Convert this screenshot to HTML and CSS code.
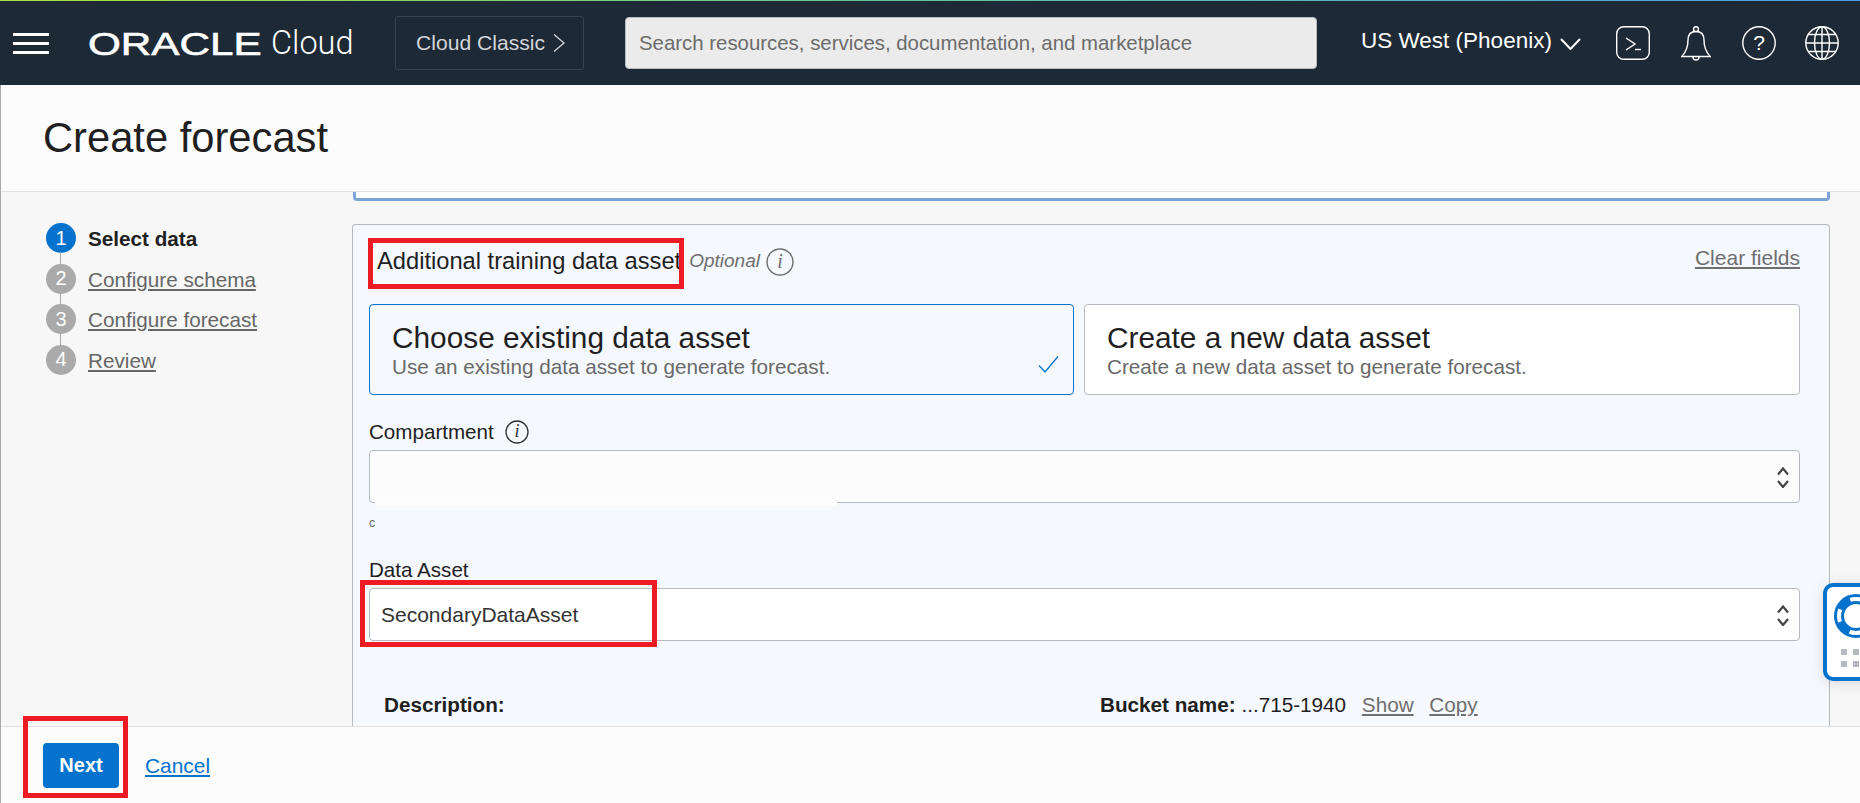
FILE: index.html
```html
<!DOCTYPE html>
<html lang="en">
<head>
  <meta charset="UTF-8">
  <title>Create forecast</title>
  <link rel="stylesheet" href="styles.css">
</head>
<body>
  <header class="topbar">
    <div class="hamburger"><span></span><span></span><span></span></div>
    <div class="logo"><span class="logo-oracle">ORACLE</span></div>
    <span class="logo-cloud">Cloud</span>
    <div class="classic-btn">
      <span>Cloud Classic</span>
      <svg width="12" height="18" viewBox="0 0 12 18"><path d="M1 0.5 L11 9 L1 17.5" fill="none" stroke="#d3d6d9" stroke-width="1.3"/></svg>
    </div>
    <div class="search">Search resources, services, documentation, and marketplace</div>
    <div class="region">US West (Phoenix)</div>
    <svg class="region-chevron" width="21" height="12" viewBox="0 0 21 12"><path d="M1 1 L10.5 11 L20 1" fill="none" stroke="#fff" stroke-width="2"/></svg>
    <svg class="icon-terminal" width="34" height="34" viewBox="0 0 34 34" fill="none" stroke="#fff" stroke-width="1.4">
      <rect x="0.7" y="0.7" width="32.6" height="32.6" rx="7"/>
      <path d="M10 12 L19 18 L10 24"/>
      <path d="M19 23.5 H25"/>
    </svg>
    <svg class="icon-bell" width="30" height="35" viewBox="0 0 30 35" fill="none" stroke="#fff" stroke-width="1.4">
      <circle cx="15" cy="3.2" r="2.4"/>
      <path d="M15 5.5 C9 5.5 7 9.5 7 14 C7 21 5 26 0.8 30.5 H29.2 C25 26 23 21 23 14 C23 9.5 21 5.5 15 5.5 Z"/>
      <path d="M12 31 A3 3 0 0 0 18 31"/>
    </svg>
    <svg class="icon-help" width="34" height="34" viewBox="0 0 34 34">
      <circle cx="17" cy="17" r="16.2" fill="none" stroke="#fff" stroke-width="1.4"/>
      <text x="17" y="24" text-anchor="middle" class="help-mark">?</text>
    </svg>
    <svg class="icon-globe" width="34" height="34" viewBox="0 0 34 34" fill="none" stroke="#fff" stroke-width="1.4">
      <circle cx="17" cy="17" r="16.2"/>
      <ellipse cx="17" cy="17" rx="7.5" ry="16.2"/>
      <path d="M17 1 V33 M1 17 H33 M3.5 8.5 H30.5 M3.5 25.5 H30.5"/>
    </svg>
  </header>

  <div class="page">
    <div class="page-title"><h1>Create forecast</h1></div>

    <div class="content">
      <nav class="steps">
        <div class="step step-active"><span class="step-num">1</span><span class="step-label">Select data</span></div>
        <div class="step"><span class="step-num">2</span><a class="step-label">Configure schema</a></div>
        <div class="step"><span class="step-num">3</span><a class="step-label">Configure forecast</a></div>
        <div class="step"><span class="step-num">4</span><a class="step-label">Review</a></div>
      </nav>

      <main class="form-col">
        <div class="prev-panel"></div>

        <section class="panel">
          <div class="panel-head">
            <span class="panel-title">Additional training data asset</span>
            <em class="optional">Optional</em>
            <svg class="info-gray" width="28" height="28" viewBox="0 0 28 28">
              <circle cx="14" cy="14" r="13" fill="none" stroke="#6f6f6f" stroke-width="1.4"/>
              <text x="14" y="20" text-anchor="middle" class="info-mark info-mark-gray">i</text>
            </svg>
            <a class="clear-link">Clear fields</a>
          </div>

          <div class="cards">
            <div class="card card-selected">
              <div class="card-title">Choose existing data asset</div>
              <div class="card-sub">Use an existing data asset to generate forecast.</div>
              <svg class="card-check" width="21" height="17" viewBox="0 0 21 17"><path d="M1 9.5 L7 16 L20 0.5" fill="none" stroke="#0572ce" stroke-width="1.3"/></svg>
            </div>
            <div class="card">
              <div class="card-title">Create a new data asset</div>
              <div class="card-sub">Create a new data asset to generate forecast.</div>
            </div>
          </div>

          <div class="field-label field-label-first">
            <span>Compartment</span>
            <svg width="24" height="24" viewBox="0 0 24 24">
              <circle cx="12" cy="12" r="11" fill="none" stroke="#333" stroke-width="1.3"/>
              <text x="12" y="17" text-anchor="middle" class="info-mark">i</text>
            </svg>
          </div>
          <div class="select select-blank">
            <div class="blank-patch"></div>
            <svg class="sort-arrows" width="12" height="22" viewBox="0 0 12 22"><path d="M1 8.5 L6 2.5 L11 8.5 M1 15 L6 21 L11 15" fill="none" stroke="#444" stroke-width="2.2"/></svg>
          </div>
          <div class="hint">c</div>

          <div class="field-label"><span>Data Asset</span></div>
          <div class="select">
            <span>SecondaryDataAsset</span>
            <svg class="sort-arrows" width="12" height="22" viewBox="0 0 12 22"><path d="M1 8.5 L6 2.5 L11 8.5 M1 15 L6 21 L11 15" fill="none" stroke="#444" stroke-width="2.2"/></svg>
          </div>

          <div class="details">
            <div><b>Description:</b></div>
            <div class="detail-bucket">
              <b>Bucket name:</b> <span>...715-1940</span>
              <a class="detail-link">Show</a>
              <a class="detail-link">Copy</a>
            </div>
          </div>
        </section>
      </main>
    </div>

    <footer class="footer">
      <button class="next-btn">Next</button>
      <a class="cancel-link">Cancel</a>
    </footer>
  </div>

  <!-- help widget, sits over the page edge -->
  <div class="help-widget">
    <svg class="buoy" width="44" height="44" viewBox="0 0 44 44" fill="none" stroke="#0572ce">
      <circle cx="22" cy="22" r="20.5" stroke-width="3"/>
      <circle cx="22" cy="22" r="13.5" stroke-width="3"/>
      <circle cx="22" cy="22" r="17" stroke-width="6" stroke-dasharray="14 12.7" stroke-dashoffset="-6.35"/>
    </svg>
    <div class="grip"><i></i><i></i><i></i><i></i></div>
  </div>

  <!-- red annotation boxes from the screenshot -->
  <div class="mark mark-title"></div>
  <div class="mark mark-asset"></div>
  <div class="mark mark-next"></div>
</body>
</html>
```

FILE: styles.css
```css
* {
  box-sizing: border-box;
}

body {
  margin: 0;
  height: 803px;
  overflow: hidden;
  font-family: "Liberation Sans", Arial, sans-serif;
  font-size: 20.6px;
  color: #1f1f1f;
  background-color: #fcfcfc;
}

/* top bar */
.topbar {
  height: 85px;
  display: flex;
  align-items: center;
  padding-left: 13px;
  background-color: #1e2936;
  border-top: 1px solid;
  border-image: linear-gradient(90deg, #a9e23c, #5fc5a0 50%, #4a9fe8) 1;
  color: #fff;
}

.hamburger {
  width: 36px;
  height: 21px;
  display: flex;
  flex-direction: column;
  justify-content: space-between;
}

.hamburger span {
  display: block;
  height: 3px;
  background-color: #fff;
}

.logo {
  width: 172px;
  margin-left: 39px;
  flex: none;
}

.logo-oracle {
  display: block;
  font-size: 32px;
  line-height: 32px;
  white-space: nowrap;
  -webkit-text-stroke: 0.6px #fff;
  transform: scaleX(1.32);
  transform-origin: left center;
  margin-top: 2px;
}

.logo-cloud {
  margin-left: 11px;
  width: 82px;
  flex: none;
  font-family: Roboto, sans-serif;
  font-weight: 300;
  font-size: 32.5px;
}

.classic-btn {
  margin-left: 42px;
  width: 189px;
  height: 54px;
  flex: none;
  display: flex;
  align-items: center;
  gap: 8px;
  padding-left: 20px;
  border: 1px solid #384351;
  border-radius: 3px;
  font-size: 21.1px;
  color: #d3d6d9;
}

.search {
  margin-left: 41px;
  width: 692px;
  height: 52px;
  flex: none;
  display: flex;
  align-items: center;
  padding-left: 13px;
  background-color: #ebebeb;
  border: 1px solid #b8bcc0;
  border-radius: 4px;
  font-size: 20.4px;
  color: #6c6c6c;
}

.region {
  margin-left: 44px;
  font-size: 22.5px;
  flex: none;
  width: 191px;
  white-space: nowrap;
  margin-top: -4px;
}

.region-chevron {
  margin-left: 8px;
  margin-top: 2px;
  flex: none;
}

.icon-terminal {
  margin-left: 35px;
  flex: none;
}

.icon-bell {
  margin-left: 31px;
  flex: none;
}

.icon-help {
  margin-left: 31px;
  flex: none;
}

.icon-globe {
  margin-left: 29px;
  flex: none;
}

.help-mark {
  font-size: 21px;
  fill: #fff;
}

/* page */
.page {
  border-left: 1px solid #aaa;
  height: 718px;
  display: flex;
  flex-direction: column;
}

.page-title {
  height: 107px;
  flex: none;
  display: flex;
  align-items: center;
  padding-left: 42px;
  border-bottom: 1px solid #e2e2e2;
  background-color: #fcfcfc;
}

.page-title h1 {
  margin: 0;
  font-size: 41.7px;
  font-weight: normal;
}

.content {
  height: 534px;
  flex: none;
  display: flex;
  overflow: hidden;
  background-color: #f7f7f7;
}

/* steps nav */
.steps {
  width: 351px;
  flex: none;
  padding: 31px 0 0 45px;
}

.step {
  position: relative;
  height: 40.67px;
  display: flex;
  align-items: flex-start;
  gap: 12px;
}

.step + .step::before {
  content: "";
  position: absolute;
  left: 14px;
  top: -12px;
  width: 1px;
  height: 13px;
  background-color: #aaa;
}

.step-num {
  width: 30px;
  height: 30px;
  border-radius: 50%;
  flex: none;
  display: flex;
  align-items: center;
  justify-content: center;
  background-color: #aaa;
  color: #fff;
  font-size: 20px;
}

.step-label {
  padding-top: 1px;
  line-height: 30px;
  font-size: 20.7px;
  color: #666;
  text-decoration: underline;
}

.step-active .step-num {
  background-color: #0572ce;
}

.step-active .step-label {
  font-weight: bold;
  color: #1f1f1f;
  text-decoration: none;
}

/* form column */
.form-col {
  width: 1478px;
  flex: none;
}

.prev-panel {
  height: 9px;
  margin-left: 1px;
  background-color: #fff;
  border: 3px solid #7aa5d8;
  border-top: none;
  border-radius: 0 0 4px 4px;
}

.panel {
  margin-top: 23px;
  height: 520px;
  padding: 0 29px 0 16px;
  background-color: #f5f8fd;
  border: 1px solid #b5bac1;
  border-bottom: none;
  border-radius: 4px 4px 0 0;
}

.panel-head {
  height: 72px;
  margin-bottom: 7px;
  display: flex;
  align-items: center;
  padding-left: 8px;
}

.panel-title {
  font-size: 23.7px;
  white-space: nowrap;
}

.optional {
  margin-left: 8px;
  font-size: 19px;
  color: #6f6f6f;
}

.info-gray {
  margin-left: 6px;
  margin-top: 2px;
}

.info-mark {
  font-family: "Liberation Serif", serif;
  font-style: italic;
  font-size: 18px;
  fill: #333;
}

.info-mark-gray {
  font-size: 20px;
  fill: #6f6f6f;
}

.clear-link {
  margin-left: auto;
  margin-top: -6px;
  font-size: 21px;
  color: #6f6f6f;
  text-decoration: underline;
}

.cards {
  display: grid;
  grid-template-columns: 705px 1fr;
  gap: 10px;
}

.card {
  position: relative;
  height: 91px;
  padding: 16px 0 0 22px;
  background-color: #fff;
  border: 1px solid #b5bac1;
  border-radius: 4px;
}

.card-selected {
  background-color: #f5f8fd;
  border-color: #0572ce;
}

.card-title {
  font-size: 29.8px;
  line-height: 34px;
}

.card-sub {
  font-size: 20.7px;
  line-height: 24px;
  color: #6a6a6a;
}

.card-check {
  position: absolute;
  right: 14px;
  bottom: 21px;
}

.field-label {
  margin-top: 25px;
  height: 24px;
  line-height: 24px;
  display: flex;
  align-items: center;
  gap: 11px;
}

.select {
  position: relative;
  margin-top: 6px;
  height: 53px;
  display: flex;
  align-items: center;
  padding-left: 11px;
  font-size: 21px;
  color: #333;
  background-color: #fff;
  border: 1px solid #b5bac1;
  border-radius: 4px;
}

.select-blank {
  background-color: #fcfcfc;
}

.blank-patch {
  position: absolute;
  left: 5px;
  bottom: -4px;
  width: 462px;
  height: 8px;
  background-color: #fdfdfd;
}

.sort-arrows {
  position: absolute;
  right: 10px;
  top: 15px;
}

.hint {
  margin-top: 10px;
  height: 20px;
  line-height: 20px;
  font-size: 12px;
  color: #666;
}

.details {
  margin-top: 52px;
  padding-left: 15px;
  display: grid;
  grid-template-columns: 716px 1fr;
  line-height: 24px;
  font-size: 20.7px;
}

.detail-bucket {
  white-space: nowrap;
}

.detail-link {
  margin-left: 10px;
  color: #6f6f6f;
  text-decoration: underline;
}

/* footer */
.footer {
  height: 77px;
  flex: none;
  display: flex;
  align-items: center;
  padding-left: 42px;
  border-top: 1px solid #e2e2e2;
  background-color: #fcfcfc;
}

.next-btn {
  width: 76px;
  height: 45px;
  background-color: #0572ce;
  color: #fff;
  border: none;
  border-radius: 4px;
  font-family: inherit;
  font-size: 20px;
  font-weight: bold;
}

.cancel-link {
  margin-left: 26px;
  margin-top: 1px;
  font-size: 20.9px;
  color: #0572ce;
  text-decoration: underline;
}

/* overlays */
.help-widget {
  position: absolute;
  left: 1823px;
  top: 583px;
  width: 60px;
  height: 98px;
  padding: 7px 0 0 7px;
  background-color: #fff;
  border: 4px solid #0572ce;
  border-radius: 10px;
  box-shadow: 0 2px 14px rgba(0,0,0,0.12);
}

.buoy {
  display: block;
}

.grip {
  margin: 11px 0 0 7px;
  display: grid;
  grid-template-columns: 6px 6px;
  gap: 6px;
}

.grip i {
  display: block;
  width: 6px;
  height: 6px;
  background-color: #b5bac1;
}

.mark {
  position: absolute;
  border: 5px solid #ed1c24;
}

.mark-title {
  left: 368px;
  top: 238px;
  width: 316px;
  height: 51px;
}

.mark-asset {
  left: 360px;
  top: 580px;
  width: 297px;
  height: 67px;
}

.mark-next {
  left: 23px;
  top: 716px;
  width: 105px;
  height: 82px;
}
```
